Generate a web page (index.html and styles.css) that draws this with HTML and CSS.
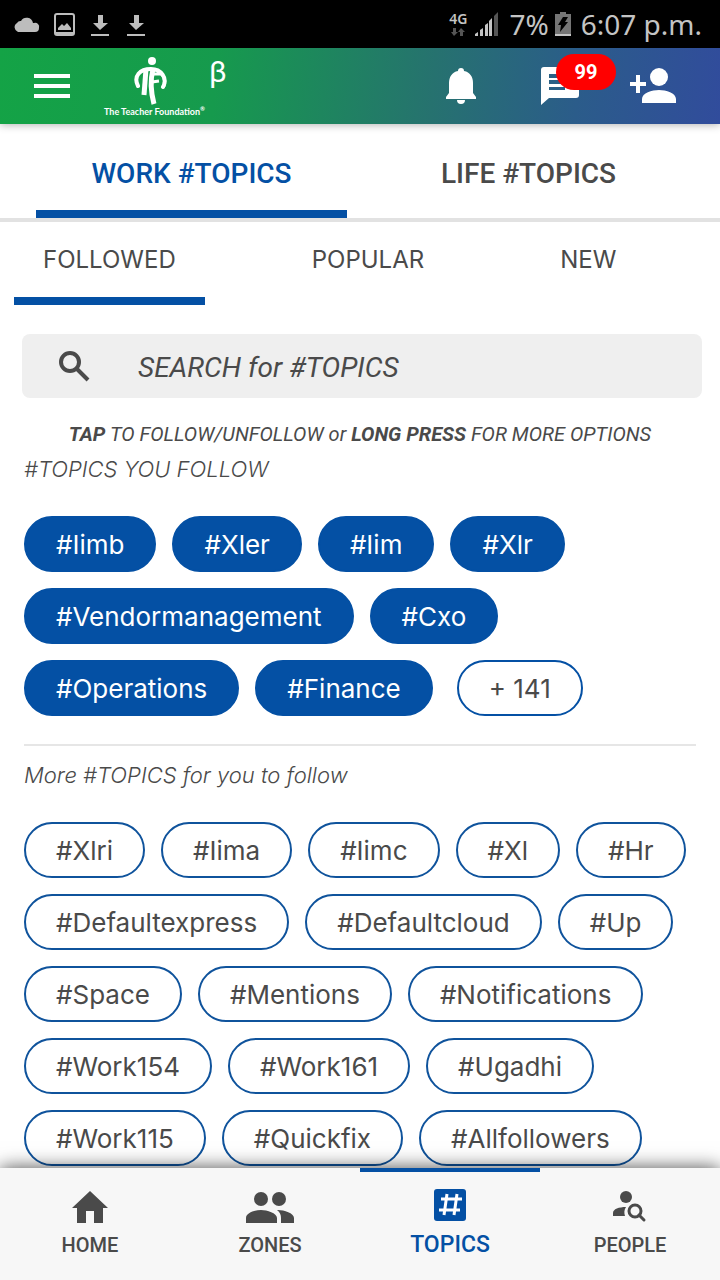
FILE: index.html
```html
<!DOCTYPE html>
<html lang="en">

<head>
  <meta charset="UTF-8">
  <meta name="viewport" content="width=device-width, initial-scale=1">
  <title>Topics</title>

  <link rel="stylesheet" href="styles.css">
</head>

<body>
  <div class="statusbar">
    <div class="notices">
      <svg width="28" height="24" viewBox="0 0 28 24"><path fill="#bdbdbd" d="M6 20a5 5 0 0 1-1-9 4 4 0 0 1 4-2 6.500 6.500 0 0 1 12 2 5 5 0 0 1 1 0 4 4 0 0 1 5 5 4 4 0 0 1-4 4z"/></svg>
      <svg width="24" height="24" viewBox="0 0 24 24"><rect x="3" y="2" width="19" height="21" rx="2" fill="none" stroke="#bdbdbd" stroke-width="2"/><path fill="#bdbdbd" d="M3 20h19v3H3zM6 18v-2l4-4 2 2 3-3 4 5v2z"/></svg>
      <svg width="24" height="24" viewBox="0 0 24 24"><path fill="#bdbdbd" d="M10 3h5v8h5l-8 7-7-7h5zM3 22h18v2H3z"/></svg>
      <svg width="24" height="24" viewBox="0 0 24 24"><path fill="#bdbdbd" d="M10 3h5v8h5l-8 7-7-7h5zM3 22h18v2H3z"/></svg>
    </div>
    <div class="network">
      <span>4G</span>
      <svg width="14" height="8" viewBox="0 0 14 8"><path fill="#555" d="M2 0h3v4h2L3 8 0 4h2zM9 8h3V4h2l-4-4-3 4h2z"/></svg>
    </div>
    <svg class="signal" width="24" height="24" viewBox="0 0 24 24"><path fill="#c4c4c4" d="M0 24v-2l3-2v4zM5 24v-6l3-2v8zM10 24V13l3-2v13z"/><path fill="#c4c4c4" d="M14 24V9l3-3v18z"/><path fill="#555" d="M19 24V4l4-4v24z"/></svg>
    <span class="status-text">7%</span>
    <svg class="battery" width="16" height="24" viewBox="0 0 16 24"><path fill="#757575" d="M5 0h6v2h5v20H0V2h5z"/><path fill="#c4c4c4" d="M0 22h16v2H0z"/><path d="M8 5h5l-3 5h3l-8 10 1-7H3z"/></svg>
    <span class="status-text">6:07 p.m.</span>
  </div>

  <header class="topbar">
    <button class="icon-btn" aria-label="Menu">
      <svg width="36" height="26" viewBox="0 0 36 26"><path fill="#fff" d="M0 1h36v4H0zM0 11h36v4H0zM0 21h36v4H0z"/></svg>
    </button>
    <div class="brand">
      <svg width="42" height="50" viewBox="0 0 42 50">
        <circle cx="18" cy="5" r="4" fill="#fff"/>
        <g fill="none" stroke="#fff">
          <path stroke-width="4" stroke-linecap="round" d="M4 30C-1 20 6 13 17 13 27 13 34 22 29 31"/>
          <path stroke-width="3" stroke-linecap="round" d="M23 15C29 18 32 23 30 30"/>
          <path stroke-width="5" d="M12 13L10 39"/>
          <path stroke-width="5" d="M19 13C16 25 17 37 20 48"/>
          <path stroke-width="3" d="M18 18h9M18 26l7-1"/>
        </g>
      </svg>
      <span class="brand-name">The Teacher Foundation<sup>®</sup></span>
    </div>
    <span class="beta">β</span>
    <div class="actions">
      <button class="icon-btn" aria-label="Notifications">
        <svg width="30" height="38" viewBox="0 0 30 38"><path fill="#fff" d="M15 1a3 3 0 0 1 3 3c6 1 9 6 9 12v10l3 4v2H0v-2l3-4V16C3 10 6 5 12 4a3 3 0 0 1 3-3zM11 33h8a4 4 0 0 1-8 0z"/></svg>
      </button>
      <button class="icon-btn messages" aria-label="Messages">
        <svg width="40" height="40" viewBox="0 0 40 40"><path fill="#fff" fill-rule="evenodd" d="M4 1h32a3 3 0 0 1 3 3v25a3 3 0 0 1-3 3H9l-8 7V4a3 3 0 0 1 3-3zM9 8v4h22V8zM9 14v4h22v-4zM9 21v3h16v-3z"/></svg>
        <span class="badge">99</span>
      </button>
      <button class="icon-btn" aria-label="Add person">
        <svg width="48" height="36" viewBox="0 0 48 36"><g fill="#fff"><circle cx="31" cy="9" r="9"/><path d="M14 35v-4c0-6 10-9 17-9s17 3 17 9v4zM8 7h4v7h6v4h-6v7H8v-7H2v-4h6z"/></g></svg>
      </button>
    </div>
  </header>

  <nav class="tabs">
    <a href="#work" class="tab active">WORK #TOPICS</a>
    <a href="#life" class="tab">LIFE #TOPICS</a>
  </nav>

  <main class="content">
    <nav class="subtabs">
      <a href="#followed" class="subtab active">FOLLOWED</a>
      <a href="#popular" class="subtab">POPULAR</a>
      <a href="#new" class="subtab">NEW</a>
    </nav>

    <label class="search">
      <svg width="32" height="32" viewBox="0 0 32 32"><g fill="none" stroke="#4a4a4a" stroke-width="4"><circle cx="12" cy="12" r="9"/><path d="M18 18l12 12"/></g></svg>
      <input type="search" placeholder="SEARCH for #TOPICS" aria-label="Search topics">
    </label>

    <p class="hint"><b>TAP</b> TO FOLLOW/UNFOLLOW or <b>LONG PRESS</b> FOR MORE OPTIONS</p>

    <section class="topics">
      <h2>#TOPICS YOU FOLLOW</h2>
      <div class="chips followed">
        <button class="chip">#Iimb</button>
        <button class="chip">#Xler</button>
        <button class="chip">#Iim</button>
        <button class="chip">#Xlr</button>
        <button class="chip">#Vendormanagement</button>
        <button class="chip">#Cxo</button>
        <button class="chip">#Operations</button>
        <button class="chip">#Finance</button>
        <button class="chip more">+ 141</button>
      </div>
    </section>

    <section class="topics suggested">
      <h2>More #TOPICS for you to follow</h2>
      <div class="chips">
        <button class="chip">#Xlri</button>
        <button class="chip">#Iima</button>
        <button class="chip">#Iimc</button>
        <button class="chip">#Xl</button>
        <button class="chip">#Hr</button>
        <button class="chip">#Defaultexpress</button>
        <button class="chip">#Defaultcloud</button>
        <button class="chip">#Up</button>
        <button class="chip">#Space</button>
        <button class="chip">#Mentions</button>
        <button class="chip">#Notifications</button>
        <button class="chip">#Work154</button>
        <button class="chip">#Work161</button>
        <button class="chip">#Ugadhi</button>
        <button class="chip">#Work115</button>
        <button class="chip">#Quickfix</button>
        <button class="chip">#Allfollowers</button>
      </div>
    </section>
  </main>

  <nav class="bottombar">
    <a href="#home" class="nav-item">
      <svg width="48" height="36" viewBox="0 0 48 36"><path fill="#4a4a4a" d="M24 3l18 17h-5v15h-9V23h-8v12h-9V20H6z"/></svg>
      <span>HOME</span>
    </a>
    <a href="#zones" class="nav-item">
      <svg width="48" height="36" viewBox="0 0 48 36"><g fill="#4a4a4a"><circle cx="15" cy="11" r="7"/><circle cx="33" cy="11" r="7"/><path d="M0 35v-5c0-5 9-8 15-8s16 3 16 8v5zM32 22c6 0 16 3 16 8v5H35v-5c0-3-1-6-4-8z"/></g></svg>
      <span>ZONES</span>
    </a>
    <a href="#topics" class="nav-item active">
      <svg width="48" height="36" viewBox="0 0 48 36"><rect x="8" y="1" width="32" height="32" rx="3" fill="#0450a4"/><path fill="none" stroke="#fff" stroke-width="3" d="M21 6l-3 21M31 6l-3 21M15 11h21M13 22h21"/></svg>
      <span>TOPICS</span>
    </a>
    <a href="#people" class="nav-item">
      <svg width="48" height="36" viewBox="0 0 48 36"><circle cx="20" cy="9" r="6" fill="#4a4a4a"/><path fill="#4a4a4a" d="M7 28v-3c0-4 6-6 13-6-2 3-2 6-1 9z"/><g fill="none" stroke="#4a4a4a" stroke-width="3"><circle cx="29" cy="23" r="6"/><path d="M33 27l5 5" stroke-linecap="round"/></g></svg>
      <span>PEOPLE</span>
    </a>
  </nav>
</body>

</html>
```
FILE: styles.css
```css
* {
  box-sizing: border-box;
}

body {
  display: flex;
  flex-direction: column;
  height: 100vh;
  margin: 0;
  overflow: hidden;
  background: #fff;
  color: #4a4a4a;
  font-family: Roboto, sans-serif;
}

svg {
  display: block;
}

a {
  color: inherit;
  text-decoration: none;
}

button {
  padding: 0;
  border: 0;
  background: none;
  color: inherit;
  font: inherit;
}

.statusbar {
  display: flex;
  align-items: center;
  height: 48px;
  padding: 0 18px 0 12px;
  background: #000;
  color: #c4c4c4;
  font-family: "Noto Sans", sans-serif;
}

.notices {
  display: flex;
  gap: 12px;
  margin-right: auto;
}

.network {
  display: flex;
  flex-direction: column;
  align-items: center;
  gap: 2px;
  font-size: 14px;
  font-weight: 600;
  line-height: 14px;
}

.signal {
  margin: 0 10px 0 8px;
}

.battery {
  margin: 0 10px 0 6px;
}

.status-text {
  font-size: 28px;
  line-height: 48px;
}

.topbar {
  display: flex;
  align-items: center;
  height: 76px;
  padding: 0 44px 0 34px;
  background: linear-gradient(95deg, #14a346 0%, #169a4d 30%, #26726f 60%, #2b5c8a 80%, #314c9c 100%);
  color: #fff;
  box-shadow: 0 1px 8px rgba(0, 0, 0, 0.3);
}

.brand {
  display: flex;
  flex-direction: column;
  align-items: center;
  margin-left: 34px;
}

.brand-name {
  font-family: Lato, sans-serif;
  font-size: 9px;
  font-weight: 700;
  line-height: 11px;
}

.brand-name sup {
  font-size: 6px;
  line-height: 1px;
}

.beta {
  align-self: flex-start;
  margin-left: 4px;
  font-size: 30px;
  line-height: 48px;
}

.actions {
  display: flex;
  align-items: center;
  gap: 50px;
  margin-left: auto;
}

.messages {
  position: relative;
  margin: 0 -2px 0 14px;
}

.badge {
  position: absolute;
  top: -12px;
  left: 16px;
  width: 60px;
  border-radius: 18px;
  background: #f00;
  font-size: 20px;
  font-weight: 700;
  line-height: 36px;
  text-align: center;
}

.tabs {
  display: flex;
  gap: 26px;
  padding: 0 36px;
  border-bottom: 4px solid #e2e2e2;
}

.tab {
  flex: 1;
  padding: 32px 0 18px;
  border-bottom: 8px solid transparent;
  font-size: 28px;
  font-weight: 500;
  line-height: 36px;
  text-align: center;
}

.tab.active {
  border-color: #0450a4;
  color: #0450a4;
}

.content {
  flex: 1;
  min-height: 0;
  overflow: hidden;
}

.subtabs {
  display: flex;
  gap: 78px;
  padding: 0 14px;
  font-family: Inter, sans-serif;
  font-size: 24px;
  line-height: 32px;
}

.subtab {
  padding: 22px 29px 21px;
  border-bottom: 8px solid transparent;
}

.subtab.active {
  border-color: #0450a4;
}

.search {
  display: flex;
  align-items: center;
  gap: 48px;
  height: 64px;
  margin: 29px 18px 0 22px;
  padding: 0 36px;
  border-radius: 8px;
  background: #efefef;
}

.search input {
  flex: 1;
  min-width: 0;
  padding: 2px 0 0;
  border: 0;
  outline: 0;
  background: none;
  font: italic 28px Roboto, sans-serif;
}

.search input::placeholder {
  color: #4a4a4a;
}

.hint {
  margin: 22px 0 0;
  font-size: 20px;
  font-style: italic;
  line-height: 28px;
  text-align: center;
}

.topics {
  margin: 0 24px;
}

.topics h2 {
  margin: 0;
  padding: 6px 0 32px;
  font-family: Inter, sans-serif;
  font-size: 22px;
  font-style: italic;
  font-weight: 300;
  line-height: 30px;
}

.suggested {
  margin-top: 28px;
  border-top: 2px solid #e6e6e6;
}

.suggested h2 {
  padding-top: 14px;
}

.chips {
  display: flex;
  flex-wrap: wrap;
  gap: 16px;
}

.chip {
  height: 56px;
  padding: 0 30px;
  border: 2px solid #0f539c;
  border-radius: 28px;
  font-family: Inter, sans-serif;
  font-size: 26px;
}

.followed .chip {
  border-color: #0450a4;
  background: #0450a4;
  color: #fff;
}

.followed .more {
  margin-left: 8px;
  background: #fff;
  color: #4a4a4a;
}

.bottombar {
  position: relative;
  display: grid;
  grid-template-columns: repeat(4, 1fr);
  height: 112px;
  background: #f7f7f7;
  box-shadow: 0 0 18px rgba(0, 0, 0, 0.7);
}

.nav-item {
  display: flex;
  flex-direction: column;
  align-items: center;
  gap: 7px;
  padding-top: 16px;
  border-top: 4px solid transparent;
  font-size: 20px;
  font-weight: 500;
  line-height: 28px;
}

.nav-item.active {
  border-color: #0450a4;
  color: #0450a4;
  font-size: 23px;
}
```
